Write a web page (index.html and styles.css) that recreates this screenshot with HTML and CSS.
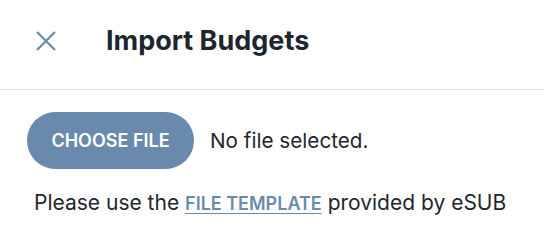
FILE: index.html
```html
<!DOCTYPE html>
<html lang="en">
<head>
<meta charset="utf-8">
<title>Import Budgets</title>
<link rel="stylesheet" href="styles.css">
</head>
<body>
<div class="dialog">
  <header class="dialog-header">
    <button class="close-btn" aria-label="Close">
      <svg width="20" height="20" viewBox="0 0 20 20" aria-hidden="true">
        <path d="M1 1 L19 19 M19 1 L1 19" stroke="#6a8aad" stroke-width="2.2" fill="none"/>
      </svg>
    </button>
    <h1 class="dialog-title">Import Budgets</h1>
  </header>
  <main class="dialog-body">
    <div class="file-row">
      <span class="choose-btn">CHOOSE FILE</span>
      <span class="file-status">No file selected.</span>
    </div>
    <p class="hint">Please use the <a class="template-link" href="#">FILE TEMPLATE</a> provided by eSUB</p>
  </main>
</div>
</body>
</html>
```
FILE: styles.css
```css
html, body {
  margin: 0;
  padding: 0;
  background: #ffffff;
}
body {
  font-family: Inter, "Noto Sans", sans-serif;
  color: #1f2630;
}
.dialog {
  width: 544px;
}
.dialog-header {
  display: flex;
  align-items: center;
  height: 90px;
  padding: 0 0 8px 36px;
  border-bottom: 1px solid #e2e2e2;
  box-sizing: border-box;
}
.close-btn {
  border: 0;
  background: none;
  padding: 0;
  width: 20px;
  height: 20px;
  display: flex;
  margin-right: 50px;
}
.dialog-title {
  margin: 0;
  font-size: 27px;
  font-weight: 700;
  color: #1d252e;
  line-height: 32px;
}
.dialog-body {
  padding: 22px 0 0 27px;
}
.file-row {
  display: flex;
  align-items: center;
  gap: 16px;
}
.choose-btn {
  display: inline-flex;
  align-items: center;
  justify-content: center;
  height: 57px;
  width: 167px;
  box-sizing: border-box;
  border-radius: 29px;
  background: #6a8aad;
  color: #ffffff;
  font-size: 18px;
  font-weight: 600;
}
.file-status {
  font-size: 20.7px;
}
.hint {
  margin: 22px 0 0 7px;
  font-size: 21px;
  line-height: 24px;
}
.template-link {
  color: #6a8aad;
  font-size: 18px;
  font-weight: 600;
  text-decoration: underline;
  text-underline-offset: 3px;
}
```
